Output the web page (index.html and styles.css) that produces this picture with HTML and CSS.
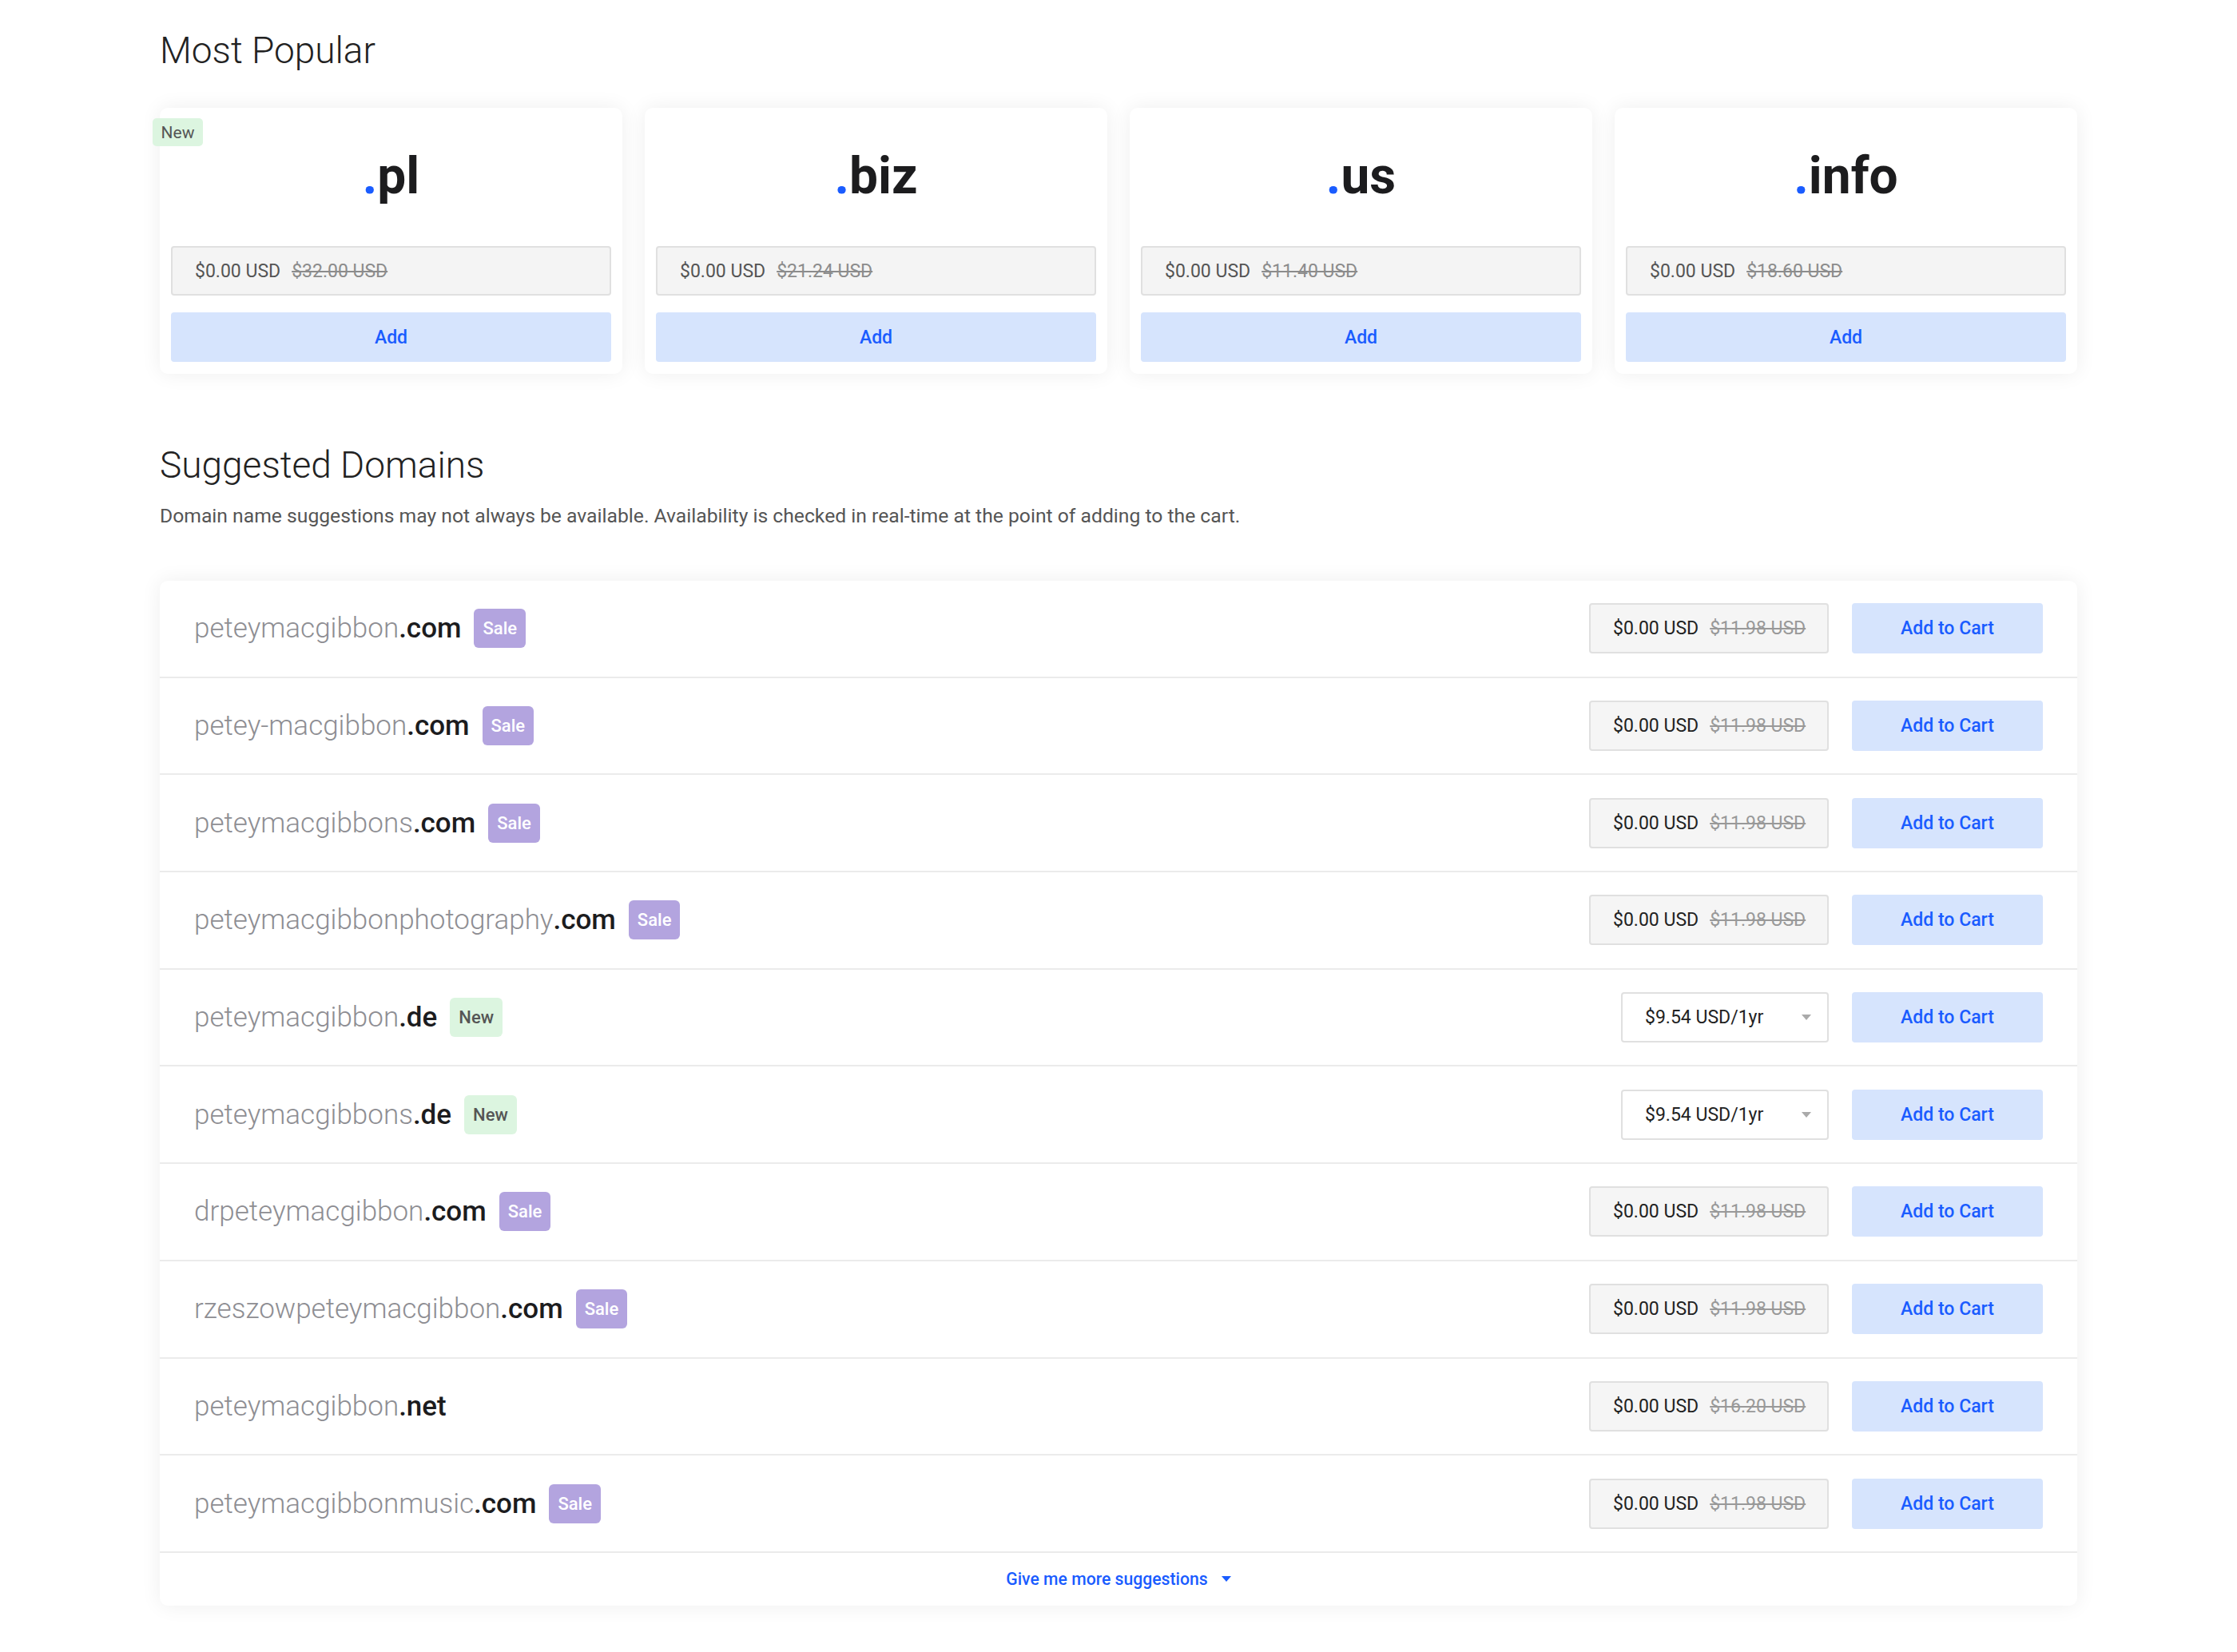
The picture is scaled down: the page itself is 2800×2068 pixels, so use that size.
FILE: index.html
```html
<!DOCTYPE html>
<html lang="en">
<head>
<meta charset="utf-8">
<title>Domains</title>
<link rel="stylesheet" href="styles.css">
</head>
<body>
<div class="wrap">
  <h2 class="section-title">Most Popular</h2>
  <div class="tld-grid">
    <div class="tld-card">
      <span class="badge badge-new badge-corner">New</span>
      <div class="tld-name"><span class="dot">.</span>pl</div>
      <div class="price-box"><span class="price-now">$0.00 USD</span><span class="price-old">$32.00 USD</span></div>
      <button class="btn-add">Add</button>
    </div>
    <div class="tld-card">
      <div class="tld-name"><span class="dot">.</span>biz</div>
      <div class="price-box"><span class="price-now">$0.00 USD</span><span class="price-old">$21.24 USD</span></div>
      <button class="btn-add">Add</button>
    </div>
    <div class="tld-card">
      <div class="tld-name"><span class="dot">.</span>us</div>
      <div class="price-box"><span class="price-now">$0.00 USD</span><span class="price-old">$11.40 USD</span></div>
      <button class="btn-add">Add</button>
    </div>
    <div class="tld-card">
      <div class="tld-name"><span class="dot">.</span>info</div>
      <div class="price-box"><span class="price-now">$0.00 USD</span><span class="price-old">$18.60 USD</span></div>
      <button class="btn-add">Add</button>
    </div>
  </div>

  <h2 class="section-title suggested-title">Suggested Domains</h2>
  <p class="section-desc">Domain name suggestions may not always be available. Availability is checked in real-time at the point of adding to the cart.</p>

  <div class="domain-list">
    <div class="domain-row">
      <div class="domain-name"><span class="sld">peteymacgibbon</span><span class="tld">.com</span></div>
      <span class="badge badge-sale">Sale</span>
      <div class="row-actions">
        <div class="row-price"><span class="price-now">$0.00 USD</span><span class="price-old">$11.98 USD</span></div>
        <button class="btn-cart">Add to Cart</button>
      </div>
    </div>
    <div class="domain-row">
      <div class="domain-name"><span class="sld">petey-macgibbon</span><span class="tld">.com</span></div>
      <span class="badge badge-sale">Sale</span>
      <div class="row-actions">
        <div class="row-price"><span class="price-now">$0.00 USD</span><span class="price-old">$11.98 USD</span></div>
        <button class="btn-cart">Add to Cart</button>
      </div>
    </div>
    <div class="domain-row">
      <div class="domain-name"><span class="sld">peteymacgibbons</span><span class="tld">.com</span></div>
      <span class="badge badge-sale">Sale</span>
      <div class="row-actions">
        <div class="row-price"><span class="price-now">$0.00 USD</span><span class="price-old">$11.98 USD</span></div>
        <button class="btn-cart">Add to Cart</button>
      </div>
    </div>
    <div class="domain-row">
      <div class="domain-name"><span class="sld">peteymacgibbonphotography</span><span class="tld">.com</span></div>
      <span class="badge badge-sale">Sale</span>
      <div class="row-actions">
        <div class="row-price"><span class="price-now">$0.00 USD</span><span class="price-old">$11.98 USD</span></div>
        <button class="btn-cart">Add to Cart</button>
      </div>
    </div>
    <div class="domain-row">
      <div class="domain-name"><span class="sld">peteymacgibbon</span><span class="tld">.de</span></div>
      <span class="badge badge-new">New</span>
      <div class="row-actions">
        <div class="row-select"><span class="select-text">$9.54 USD/1yr</span><span class="caret-gray"></span></div>
        <button class="btn-cart">Add to Cart</button>
      </div>
    </div>
    <div class="domain-row">
      <div class="domain-name"><span class="sld">peteymacgibbons</span><span class="tld">.de</span></div>
      <span class="badge badge-new">New</span>
      <div class="row-actions">
        <div class="row-select"><span class="select-text">$9.54 USD/1yr</span><span class="caret-gray"></span></div>
        <button class="btn-cart">Add to Cart</button>
      </div>
    </div>
    <div class="domain-row">
      <div class="domain-name"><span class="sld">drpeteymacgibbon</span><span class="tld">.com</span></div>
      <span class="badge badge-sale">Sale</span>
      <div class="row-actions">
        <div class="row-price"><span class="price-now">$0.00 USD</span><span class="price-old">$11.98 USD</span></div>
        <button class="btn-cart">Add to Cart</button>
      </div>
    </div>
    <div class="domain-row">
      <div class="domain-name"><span class="sld">rzeszowpeteymacgibbon</span><span class="tld">.com</span></div>
      <span class="badge badge-sale">Sale</span>
      <div class="row-actions">
        <div class="row-price"><span class="price-now">$0.00 USD</span><span class="price-old">$11.98 USD</span></div>
        <button class="btn-cart">Add to Cart</button>
      </div>
    </div>
    <div class="domain-row">
      <div class="domain-name"><span class="sld">peteymacgibbon</span><span class="tld">.net</span></div>
      <div class="row-actions">
        <div class="row-price"><span class="price-now">$0.00 USD</span><span class="price-old">$16.20 USD</span></div>
        <button class="btn-cart">Add to Cart</button>
      </div>
    </div>
    <div class="domain-row">
      <div class="domain-name"><span class="sld">peteymacgibbonmusic</span><span class="tld">.com</span></div>
      <span class="badge badge-sale">Sale</span>
      <div class="row-actions">
        <div class="row-price"><span class="price-now">$0.00 USD</span><span class="price-old">$11.98 USD</span></div>
        <button class="btn-cart">Add to Cart</button>
      </div>
    </div>
    <div class="list-footer">
      <span class="more-link">Give me more suggestions</span><span class="caret-blue"></span>
    </div>
  </div>
</div>
</body>
</html>
```
FILE: styles.css
```css
* { box-sizing: border-box; }
html, body { margin: 0; padding: 0; background: #ffffff; }
body { font-family: Roboto, "Liberation Sans", Arial, sans-serif; color: #222; }

.wrap { width: 2400px; margin: 0 auto; padding: 31px 0 59px; }

.section-title {
  margin: 0;
  font-weight: 300;
  font-size: 46px;
  line-height: 64px;
  color: #222;
}

.tld-grid {
  margin-top: 40px;
  display: grid;
  grid-template-columns: repeat(4, 1fr);
  gap: 28px;
}

.tld-card {
  position: relative;
  height: 333px;
  padding: 54px 14px 15px;
  background: #fff;
  border-radius: 10px;
  box-shadow: 0 0 26px rgba(0, 0, 0, 0.07);
  display: flex;
  flex-direction: column;
}

.tld-name {
  text-align: center;
  font-weight: 700;
  font-size: 64px;
  line-height: 64px;
  height: 64px;
  color: #1c1c1e;
}
.tld-name .dot { color: #1a5cff; }

.badge {
  display: inline-flex;
  align-items: center;
  justify-content: center;
  border-radius: 6px;
  font-weight: 500;
}
.badge-corner {
  position: absolute;
  left: -9px;
  top: 13px;
  width: 63px;
  height: 35px;
  font-size: 21px;
  font-weight: 400;
  border-radius: 5px;
}
.badge-new { background: #dcf5e0; color: #555; }
.badge-sale { background: #b3a4df; color: #fff; }

.price-box {
  margin-top: 55px;
  height: 62px;
  background: #f4f4f4;
  border: 2px solid #e0e0e0;
  border-radius: 4px;
  padding: 0 28px;
  display: flex;
  align-items: center;
  font-size: 23px;
  color: #555;
  white-space: nowrap;
}
.price-now, .price-old { flex-shrink: 0; white-space: nowrap; }
.price-old {
  margin-left: 14px;
  color: #8c8c8c;
  text-decoration: line-through;
}

.btn-add, .btn-cart {
  border: 0;
  border-radius: 4px;
  background: #d6e4fd;
  color: #1a5cff;
  font-family: inherit;
  font-weight: 500;
  font-size: 23px;
  cursor: pointer;
  padding: 0;
}
.btn-add {
  margin-top: 21px;
  height: 62px;
  width: 100%;
}

.suggested-title { margin-top: 82px; }
.section-desc {
  margin: 16px 0 0;
  font-size: 24.7px;
  line-height: 32px;
  color: #555;
}

.domain-list {
  margin-top: 65px;
  background: #fff;
  border-radius: 10px;
  box-shadow: 0 0 26px rgba(0, 0, 0, 0.07);
  overflow: hidden;
}

.domain-row {
  height: 121.7px;
  padding: 0 43px;
  border-bottom: 2px solid #ebebeb;
  display: flex;
  align-items: center;
}

.domain-name { font-size: 35px; }
.domain-name .sld { font-weight: 300; color: #8e8e93; }
.domain-name .tld { font-weight: 500; color: #1c1c1e; }

.domain-row .badge {
  margin-left: 16px;
  height: 49px;
  padding: 0 11px;
  font-size: 22px;
}

.row-actions {
  margin-left: auto;
  display: flex;
  align-items: center;
  gap: 29px;
}

.row-price, .row-select {
  height: 63px;
  border: 2px solid #e0e0e0;
  border-radius: 4px;
  display: flex;
  align-items: center;
  padding: 0 28px;
  font-size: 23px;
  color: #222;
  white-space: nowrap;
}
.row-price { width: 300px; background: #f5f5f5; padding-right: 10px; }
.row-price .price-old { color: #999; }
.row-select { width: 260px; background: #fff; justify-content: space-between; padding-right: 20px; }

.caret-gray {
  width: 0; height: 0;
  border-left: 6px solid transparent;
  border-right: 6px solid transparent;
  border-top: 7px solid #aaa;
}

.btn-cart { width: 239px; height: 63px; }

.list-footer {
  height: 66px;
  display: flex;
  align-items: center;
  justify-content: center;
  color: #1a5cff;
  font-size: 21.2px;
  font-weight: 500;
}
.caret-blue {
  margin-left: 17px;
  width: 0; height: 0;
  border-left: 6px solid transparent;
  border-right: 6px solid transparent;
  border-top: 7px solid #1a5cff;
}
```
